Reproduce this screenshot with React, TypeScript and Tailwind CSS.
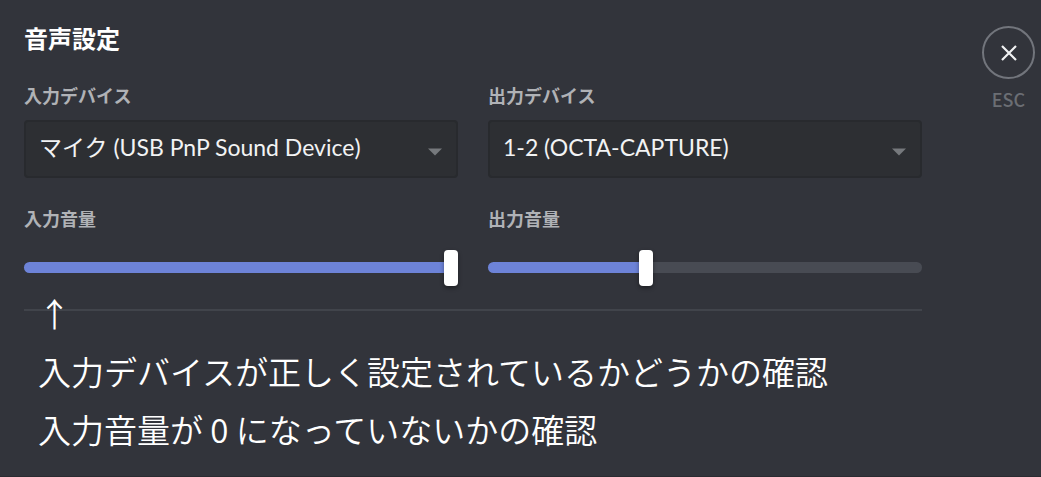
import { useId, useState } from "react";

type DeviceFieldProps = {
  deviceLabel: string;
  volumeLabel: string;
  devices: string[];
  initialVolume: number;
};

function DeviceField({ deviceLabel, volumeLabel, devices, initialVolume }: DeviceFieldProps) {
  const id = useId();
  const [volume, setVolume] = useState(initialVolume);
  // Ends the filled part of the track under the middle of the 14px thumb.
  const fill = `calc(${volume}% + ${7 - volume * 0.14}px)`;

  return (
    <div className="flex min-w-0 flex-1 flex-col">
      <label htmlFor={`${id}-device`} className="text-[18px] leading-6 font-bold text-[#b0b2b6]">
        {deviceLabel}
      </label>
      <div className="mt-[13px] grid items-center">
        <select
          id={`${id}-device`}
          className="col-start-1 row-start-1 h-[58px] w-full appearance-none rounded border-2 border-[#282a2e] bg-[#2d2f33] pr-12 pb-1 pl-[13px] font-['Lato','Noto_Sans_CJK_JP',sans-serif] text-[23px] text-[#f2f3f4] outline-none"
        >
          {devices.map((device) => (
            <option key={device}>{device}</option>
          ))}
        </select>
        <svg
          viewBox="0 0 14 8"
          className="pointer-events-none col-start-1 row-start-1 mt-1.5 mr-4 h-2 w-3.5 justify-self-end"
          aria-hidden="true"
        >
          <path d="M0 0.5h14L7 7.5z" fill="#76797d" />
        </svg>
      </div>
      <label
        htmlFor={`${id}-volume`}
        className="mt-7 text-[18px] leading-6 font-bold text-[#b0b2b6]"
      >
        {volumeLabel}
      </label>
      <input
        id={`${id}-volume`}
        type="range"
        min={0}
        max={100}
        value={volume}
        onChange={(event) => setVolume(Number(event.target.value))}
        style={{
          backgroundImage: `linear-gradient(to right, #6d83d8 ${fill}, #484b53 ${fill})`,
        }}
        className="mt-8 mb-3 h-[11px] w-full cursor-pointer appearance-none rounded-full outline-none [&::-webkit-slider-thumb]:h-9 [&::-webkit-slider-thumb]:w-3.5 [&::-webkit-slider-thumb]:appearance-none [&::-webkit-slider-thumb]:rounded [&::-webkit-slider-thumb]:bg-white [&::-webkit-slider-thumb]:shadow-[0_2px_4px_rgba(0,0,0,0.4)]"
      />
    </div>
  );
}

export default function App() {
  return (
    <main
      lang="ja"
      className="flex min-h-screen items-start gap-[60px] border-b border-[#2a2b31] bg-[#32343b] pr-1.5 pl-6 font-['Noto_Sans_CJK_JP',sans-serif]"
    >
      <section className="min-w-0 flex-1 pt-[22px]">
        <h1 className="text-[24px] leading-8 font-bold text-white">音声設定</h1>
        <div className="mt-[29px] flex gap-[30px]">
          <DeviceField
            deviceLabel="入力デバイス"
            volumeLabel="入力音量"
            devices={["マイク (USB PnP Sound Device)"]}
            initialVolume={100}
          />
          <DeviceField
            deviceLabel="出力デバイス"
            volumeLabel="出力音量"
            devices={["1-2 (OCTA-CAPTURE)"]}
            initialVolume={36}
          />
        </div>
        <hr className="mt-6 border-t-2 border-[#41444b]" />
        <div className="-mt-[27px] pl-3.5 text-[33px] leading-[58px] font-[350] text-white">
          <p>↑</p>
          <p>入力デバイスが正しく設定されているかどうかの確認</p>
          <p>入力音量が 0 になっていないかの確認</p>
        </div>
      </section>
      <button type="button" className="mt-[26px] flex flex-col items-center gap-2 text-[#6b6e74]">
        <span className="flex size-[53px] items-center justify-center rounded-full border-2 border-[#72757c]">
          <svg viewBox="0 0 16 16" className="size-4" aria-hidden="true">
            <path d="M1 1l14 14M15 1L1 15" stroke="#f0f1f2" strokeWidth="2.2" fill="none" />
          </svg>
        </span>
        <span className="text-[18px] leading-6 font-medium">ESC</span>
      </button>
    </main>
  );
}
